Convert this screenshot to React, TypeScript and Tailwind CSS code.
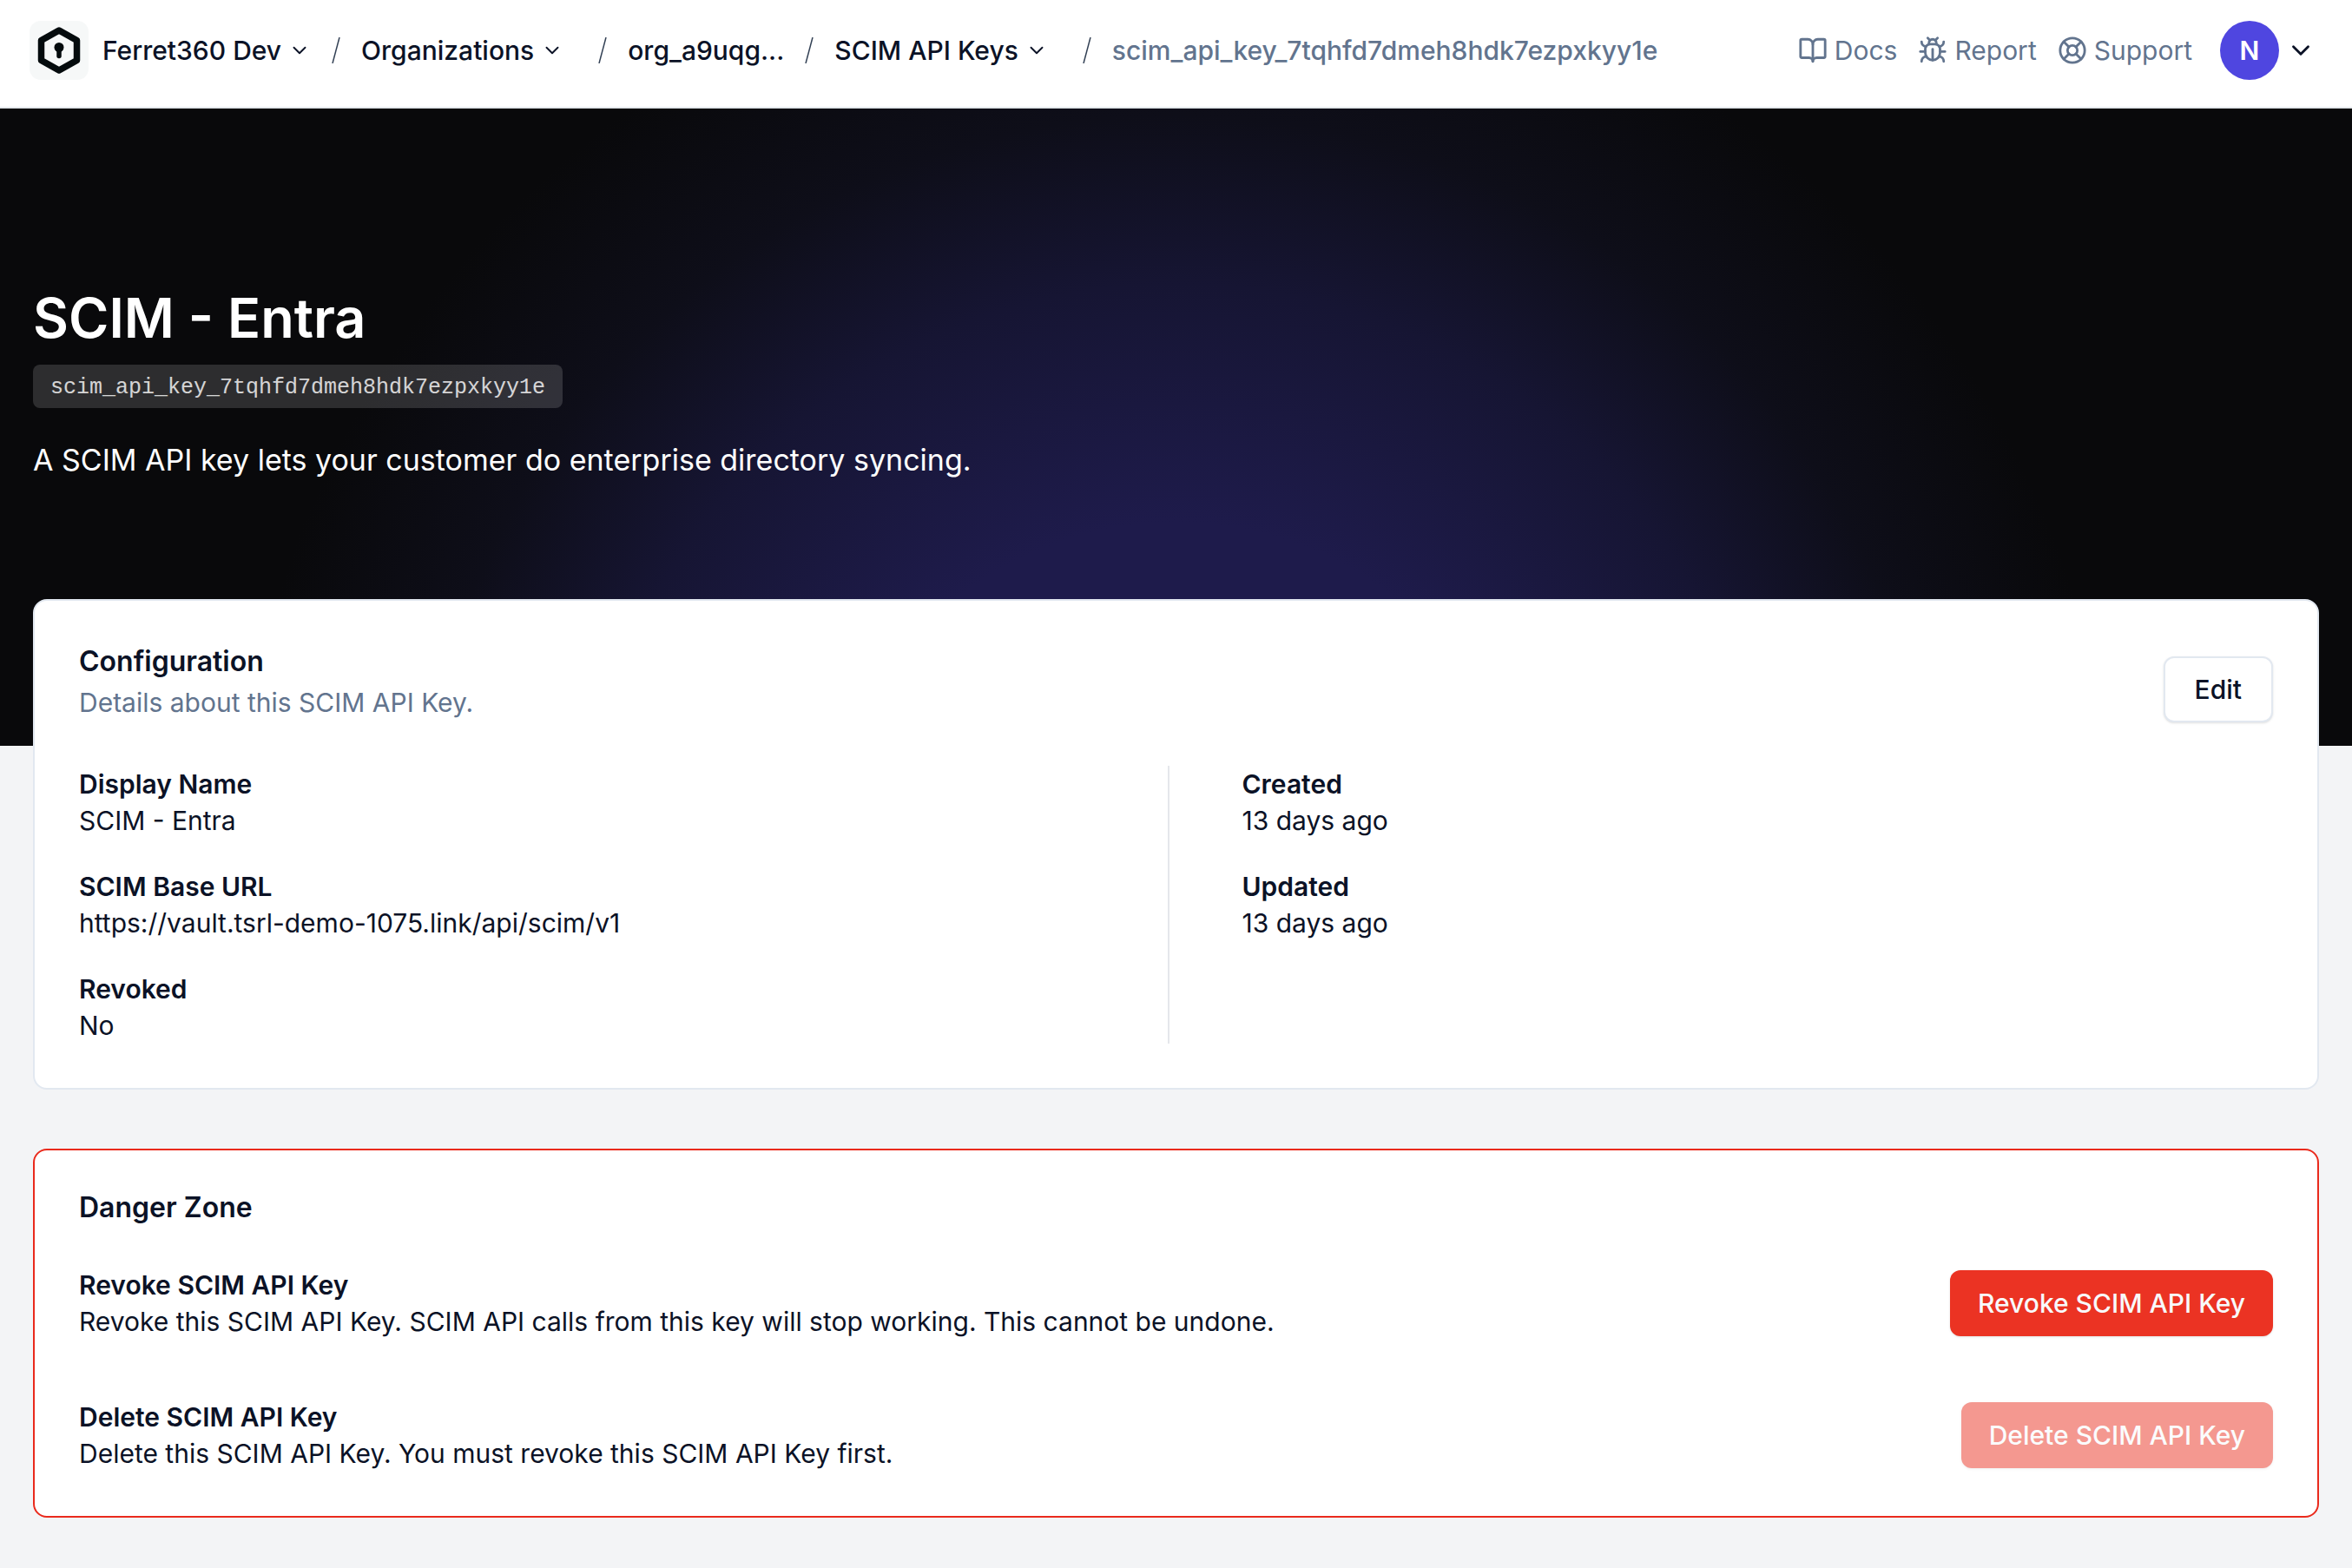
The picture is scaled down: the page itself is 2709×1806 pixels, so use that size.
import React from "react";
import { BookOpen, Bug, ChevronDown, LifeBuoy } from "lucide-react";

const KEY_ID = "scim_api_key_7tqhfd7dmeh8hdk7ezpxkyy1e";

function Logo() {
  return (
    <a href="#" aria-label="Home" className="block size-[68px] shrink-0">
      <svg viewBox="0 0 68 68" className="size-full" aria-hidden="true">
        <rect width="68" height="68" rx="13" fill="#f6f8f8" />
        <path
          d="M34 11 54.5 22.5V45.5L34 57 13.5 45.5V22.5Z"
          fill="none"
          stroke="#040b0d"
          strokeWidth="7.5"
          strokeLinejoin="round"
        />
        <circle cx="34" cy="30.5" r="5.5" fill="#040b0d" />
        <path d="M34 32V40.5" stroke="#040b0d" strokeWidth="5.5" strokeLinecap="round" />
      </svg>
    </a>
  );
}

function Slash() {
  return (
    <svg viewBox="0 0 10 30" className="h-[30px] w-[10px] shrink-0" aria-hidden="true">
      <path d="M9 0 1 30" stroke="#334155" strokeWidth="1.5" />
    </svg>
  );
}

function Crumb({ children }: { children: React.ReactNode }) {
  return (
    <button type="button" className="flex items-center gap-2">
      {children}
      <ChevronDown className="size-[26px]" strokeWidth={1.75} />
    </button>
  );
}

function NavLink({ icon: Icon, label }: { icon: React.ElementType; label: string }) {
  return (
    <a href="#" className="flex items-center gap-2 text-slate-500">
      <Icon className="size-[34px]" />
      {label}
    </a>
  );
}

function Field({ label, value }: { label: string; value: string }) {
  return (
    <div>
      <dt className="font-semibold">{label}</dt>
      <dd>{value}</dd>
    </div>
  );
}

function DangerRow(props: { title: string; text: string; action: string; disabled?: boolean }) {
  return (
    <div className="flex items-center justify-between gap-8">
      <div>
        <h3 className="font-semibold">{props.title}</h3>
        <p>{props.text}</p>
      </div>
      <button
        type="button"
        disabled={props.disabled}
        className="h-[76px] shrink-0 rounded-xl bg-[#eb3323] px-8 font-medium text-slate-50 shadow-sm disabled:opacity-50"
      >
        {props.action}
      </button>
    </div>
  );
}

export default function App() {
  return (
    <div className="min-h-screen bg-[#f3f4f6] font-['Inter',sans-serif] text-[30px] leading-[42px] text-[#0b1226]">
      <header className="flex items-center justify-between border-b-2 border-[#e5e9ec] bg-white pt-6 pr-[42px] pb-[31px] pl-[34px]">
        <nav aria-label="Breadcrumb" className="flex items-center font-medium">
          <Logo />
          <div className="ml-4 flex items-center gap-6">
            <Crumb>Ferret360 Dev</Crumb>
            <Slash />
            <div className="mr-4">
              <Crumb>Organizations</Crumb>
            </div>
            <Slash />
            <a href="#">org_a9uqg...</a>
            <Slash />
            <div className="mr-4">
              <Crumb>SCIM API Keys</Crumb>
            </div>
            <Slash />
            <span className="text-slate-500">{KEY_ID}</span>
          </div>
        </nav>
        <div className="flex items-center gap-6">
          <NavLink icon={BookOpen} label="Docs" />
          <NavLink icon={Bug} label="Report" />
          <NavLink icon={LifeBuoy} label="Support" />
          <button type="button" aria-label="Account" className="ml-2 flex items-center gap-2">
            <span className="grid size-[68px] place-items-center rounded-full bg-[#4f46e0] font-semibold text-white">
              N
            </span>
            <ChevronDown className="size-[34px]" />
          </button>
        </div>
      </header>

      <section className="bg-[#09090b] bg-[radial-gradient(circle_at_50%_120%,#1e1b4b_25%,#161533_42%,#0e0e19_54%,#09090b_67%)] px-[38px] pt-[199px] pb-[303px] text-white">
        <h1 className="text-[63px] leading-[84px] font-semibold">SCIM - Entra</h1>
        <p className="mt-3 w-fit rounded-lg bg-white/15 px-5 pt-1.5 pb-0.5 font-['Liberation_Mono',monospace] text-[25px] text-white/80">
          {KEY_ID}
        </p>
        <p className="mt-[34px] text-[34px] leading-[52px]">
          A SCIM API key lets your customer do enterprise directory syncing.
        </p>
      </section>

      <main className="-mt-[169px] flex flex-col gap-[68px] px-[38px] pb-14">
        <section className="rounded-2xl border-2 border-slate-200 bg-white px-[51px] pt-12 pb-[51px]">
          <div className="flex items-end justify-between">
            <div className="pb-0.5">
              <h2 className="text-[32px] leading-[44px] font-semibold">Configuration</h2>
              <p className="mt-1 text-slate-500">Details about this SCIM API Key.</p>
            </div>
            <button
              type="button"
              className="h-[76px] rounded-xl border-2 border-slate-200 bg-white px-[34px] font-medium shadow-sm"
            >
              Edit
            </button>
          </div>
          <div className="mt-[50px] grid grid-cols-2 gap-x-4">
            <dl className="flex flex-col gap-[34px] border-r-2 border-gray-200">
              <Field label="Display Name" value="SCIM - Entra" />
              <Field label="SCIM Base URL" value="https://vault.tsrl-demo-1075.link/api/scim/v1" />
              <Field label="Revoked" value="No" />
            </dl>
            <dl className="flex flex-col gap-[34px] pl-[68px]">
              <Field label="Created" value="13 days ago" />
              <Field label="Updated" value="13 days ago" />
            </dl>
          </div>
        </section>

        <section className="rounded-2xl border-2 border-[#ea2a1c] bg-white px-[51px] pt-12 pb-[51px]">
          <h2 className="text-[32px] leading-[36px] font-semibold">Danger Zone</h2>
          <div className="mt-[50px] flex flex-col gap-[68px]">
            <DangerRow
              title="Revoke SCIM API Key"
              text="Revoke this SCIM API Key. SCIM API calls from this key will stop working. This cannot be undone."
              action="Revoke SCIM API Key"
            />
            <DangerRow
              title="Delete SCIM API Key"
              text="Delete this SCIM API Key. You must revoke this SCIM API Key first."
              action="Delete SCIM API Key"
              disabled
            />
          </div>
        </section>
      </main>
    </div>
  );
}
